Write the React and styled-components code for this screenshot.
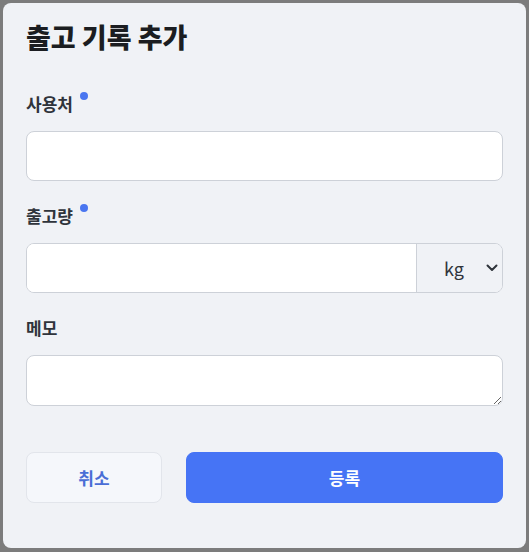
import React from 'react';
import styled, { createGlobalStyle } from 'styled-components';

const GlobalStyle = createGlobalStyle`
  html, body {
    margin: 0;
    padding: 0;
    background: #7c7c7c;
  }
  body {
    font-family: "Noto Sans CJK KR", "Noto Sans", sans-serif;
  }
  * { box-sizing: border-box; }
`;

const Backdrop = styled.div`
  padding: 3px;
  min-height: 552px;
`;

const Modal = styled.form`
  width: 523px;
  background: #f0f2f6;
  border-radius: 8px;
  padding: 18px 23px 45px 23px;
  display: flex;
  flex-direction: column;
`;

const Title = styled.h2`
  margin: 0 0 40px;
  font-size: 27px;
  line-height: 32px;
  font-weight: 800;
  color: #1b1d21;
`;

const Field = styled.div`
  display: flex;
  flex-direction: column;
  margin-bottom: ${p => p.$last ? '46px' : '24px'};
`;

const Label = styled.label`
  display: flex;
  align-items: flex-start;
  gap: 7px;
  margin-bottom: 16px;
  font-size: 17px;
  line-height: 22px;
  font-weight: 700;
  color: #2f343b;
`;

const RequiredDot = styled.span`
  width: 8px;
  height: 8px;
  margin-top: -1px;
  border-radius: 50%;
  background: #4a76f0;
`;

const TextInput = styled.input`
  height: 50px;
  width: 100%;
  border: 1px solid #cdd1d8;
  border-radius: 8px;
  background: #fff;
  padding: 0 14px;
  font: inherit;
  font-size: 15px;
  outline: none;
`;

const Group = styled.div`
  display: flex;
  height: 50px;
  border: 1px solid #cdd1d8;
  border-radius: 8px;
  overflow: hidden;
  background: #fff;
`;

const GroupInput = styled.input`
  flex: 1;
  min-width: 0;
  border: none;
  background: #fff;
  padding: 0 14px;
  font: inherit;
  font-size: 15px;
  outline: none;
`;

const UnitWrap = styled.div`
  position: relative;
  flex: 0 0 86px;
  border-left: 1px solid #cdd1d8;
  background: #f0f2f6;
`;

const UnitSelect = styled.select`
  appearance: none;
  width: 100%;
  height: 100%;
  border: none;
  background: transparent;
  padding: 0 0 0 27px;
  font-family: "Noto Sans CJK KR", "Noto Sans", sans-serif;
  font-size: 18px;
  color: #2f343b;
  outline: none;
`;

const Chevron = styled.svg`
  position: absolute;
  right: 4px;
  top: 50%;
  transform: translateY(-50%);
  pointer-events: none;
`;

const TextArea = styled.textarea`
  height: 51px;
  width: 100%;
  border: 1px solid #cdd1d8;
  border-radius: 8px;
  background: #fff;
  padding: 10px 14px;
  font: inherit;
  font-size: 15px;
  outline: none;
  display: block;
`;

const Actions = styled.div`
  display: flex;
  gap: 24px;
`;

const Button = styled.button`
  height: 51px;
  border-radius: 8px;
  font-family: "Noto Sans CJK KR", "Noto Sans", sans-serif;
  font-size: 17px;
  font-weight: 700;
  cursor: pointer;
  border: 1px solid ${p => p.$primary ? '#4674f5' : '#e2e5eb'};
  background: ${p => p.$primary ? '#4674f5' : '#f5f7fb'};
  color: ${p => p.$primary ? '#ffffff' : '#4a6ed6'};
  flex: ${p => p.$primary ? '1' : '0 0 136px'};
`;

export default function App() {
  return (
    <>
      <GlobalStyle />
      <Backdrop>
        <Modal onSubmit={e => e.preventDefault()}>
          <Title>출고 기록 추가</Title>
          <Field>
            <Label>사용처<RequiredDot /></Label>
            <TextInput type="text" />
          </Field>
          <Field>
            <Label>출고량<RequiredDot /></Label>
            <Group>
              <GroupInput type="number" />
              <UnitWrap>
                <UnitSelect defaultValue="kg">
                  <option value="kg">kg</option>
                  <option value="g">g</option>
                  <option value="L">L</option>
                </UnitSelect>
                <Chevron width="12" height="8" viewBox="0 0 12 8">
                  <path d="M1.5 1.5 L6 6 L10.5 1.5" fill="none" stroke="#2f343b" strokeWidth="2" strokeLinecap="round" strokeLinejoin="round" />
                </Chevron>
              </UnitWrap>
            </Group>
          </Field>
          <Field $last>
            <Label>메모</Label>
            <TextArea />
          </Field>
          <Actions>
            <Button type="button">취소</Button>
            <Button type="submit" $primary>등록</Button>
          </Actions>
        </Modal>
      </Backdrop>
    </>
  );
}
